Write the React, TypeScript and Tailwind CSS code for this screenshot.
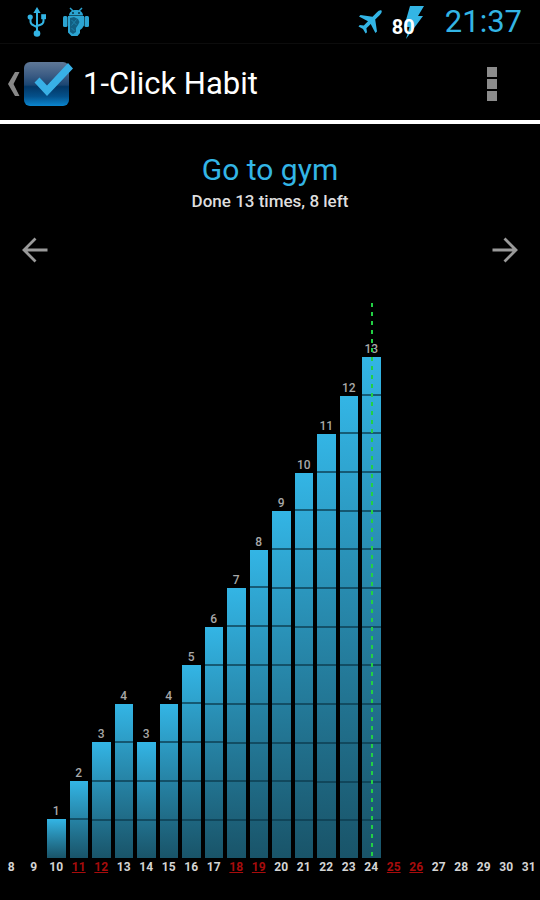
const days = [
  { day: 8, count: 0 },
  { day: 9, count: 0 },
  { day: 10, count: 1 },
  { day: 11, count: 2, weekend: true },
  { day: 12, count: 3, weekend: true },
  { day: 13, count: 4 },
  { day: 14, count: 3 },
  { day: 15, count: 4 },
  { day: 16, count: 5 },
  { day: 17, count: 6 },
  { day: 18, count: 7, weekend: true },
  { day: 19, count: 8, weekend: true },
  { day: 20, count: 9 },
  { day: 21, count: 10 },
  { day: 22, count: 11 },
  { day: 23, count: 12 },
  { day: 24, count: 13, today: true },
  { day: 25, count: 0, weekend: true },
  { day: 26, count: 0, weekend: true },
  { day: 27, count: 0 },
  { day: 28, count: 0 },
  { day: 29, count: 0 },
  { day: 30, count: 0 },
  { day: 31, count: 0 },
];

const SCALE_MAX = 14.4;

function UsbIcon() {
  return (
    <svg width="20" height="32" viewBox="0 0 20 32" fill="none" stroke="#33b5e5" strokeWidth="2">
      <path d="M10 5v22M3.5 12v3.5c0 2 1 3 3 3.8L10 21M16.5 12v3c0 2-1 3-3 3.8L10 20" />
      <path d="M10 1l3.6 6H6.4z" fill="#33b5e5" stroke="none" />
      <circle cx="3.2" cy="11" r="2.6" fill="#33b5e5" stroke="none" />
      <path d="M14.2 8.2h4.8v5h-4.8z" fill="#33b5e5" stroke="none" />
      <circle cx="10" cy="27.5" r="3.3" fill="#33b5e5" stroke="none" />
    </svg>
  );
}

function DebugIcon() {
  return (
    <svg width="28" height="32" viewBox="0 0 28 32" fill="#2ba4d2">
      <path d="M8 2l3 3M20 2l-3 3" stroke="#2ba4d2" strokeWidth="1.5" />
      <path d="M7 9.5C7 6 10 4 14 4s7 2 7 5.5z" />
      <rect x="1" y="10" width="4.5" height="11" rx="1.5" />
      <rect x="22.5" y="10" width="4.5" height="11" rx="1.5" />
      <path d="M6 10h16v9.5l-2 3-2 1.5v3l-2.5 3h-6L6 26.5z" />
      <path d="M8 12l4-1 4 2 1.5 3-1.5 3-2 3v4l-3 2-3-2z" fill="#125f82" />
      <path d="M9.500 14l5 5M14.500 13.500l-5 6M9.500 22l3 3" stroke="#1d82aa" strokeWidth="1" />
      <circle cx="11" cy="7" r="1" fill="#0b2f40" />
      <circle cx="17" cy="7" r="1" fill="#0b2f40" />
    </svg>
  );
}

function PlaneIcon() {
  return (
    <svg width="24" height="24" viewBox="0 0 24 24" fill="#33b5e5">
      <path d="M23.500.5C22-.2 20.500.7 19 2.200L14.500 6.800 2.500 5 1 6.600l9 4.700-4.200 4.300-4-.6L.5 16.400 5 19l2.600 4.500L9 22.200l-.6-4 4.300-4.200 4.700 9 1.600-1.500-1.800-12L21.800 5c1.500-1.500 2.400-3 1.700-4.500z" />
    </svg>
  );
}

function Battery() {
  return (
    <div className="relative h-9 w-8">
      <svg className="absolute top-0 right-0" width="20" height="34" viewBox="0 0 20 34" fill="#33b5e5">
        <path d="M6 1h14l-6 10h5L2 34l3.500-12H0z" />
      </svg>
      <span className="absolute top-3 left-0 text-[20px] leading-5 font-bold text-white">80</span>
    </div>
  );
}

function AppIcon() {
  return (
    <svg width="52" height="48" viewBox="0 0 52 48">
      <defs>
        <linearGradient id="tile" x1="0" y1="0" x2="0" y2="1">
          <stop offset="0" stopColor="#5f7897" />
          <stop offset="0.3" stopColor="#3c5c84" />
          <stop offset="0.52" stopColor="#1b4673" />
          <stop offset="0.56" stopColor="#033766" />
          <stop offset="0.78" stopColor="#04508a" />
          <stop offset="1" stopColor="#0a86cf" />
        </linearGradient>
      </defs>
      <rect x="1" y="2" width="45" height="44" rx="6" fill="url(#tile)" />
      <path d="M11.500 22.500l5-5 7.500 8L45 3l5 5.500L24 36z" fill="#38b0e6" />
    </svg>
  );
}

function ArrowLeft({ className = '' }: { className?: string }) {
  return (
    <svg className={className} width="26" height="26" viewBox="0 0 26 26" fill="none" stroke="#9a9a9a" strokeWidth="2.8">
      <path d="M25.500 13H2M13.500 1.500L2 13l11.500 11.500" />
    </svg>
  );
}

function StatusBar() {
  return (
    <div className="flex h-11 items-center justify-between border-b border-[#0c0c0c] pr-[18px] pl-[27px]">
      <div className="flex items-center gap-[15px]">
        <UsbIcon />
        <DebugIcon />
      </div>
      <div className="flex items-center text-[#33b5e5]">
        <PlaneIcon />
        <div className="mr-[21px] ml-[10px] pt-[2px]">
          <Battery />
        </div>
        <span className="text-[31px] leading-9">21:37</span>
      </div>
    </div>
  );
}

function ActionBar() {
  return (
    <header className="flex h-20 items-center justify-between border-b-4 border-white pt-1 pr-[41px] pl-[7px]">
      <div className="flex items-center">
        <button aria-label="Back" className="flex items-center">
          <svg width="16" height="26" viewBox="0 0 16 26" fill="#888">
            <path d="M8 1h4.500L6.500 13l6 12H8L1 13z" />
          </svg>
          <AppIcon />
        </button>
        <h1 className="ml-2 text-[31px] leading-9 text-white">1-Click Habit</h1>
      </div>
      <button aria-label="More options" className="flex flex-col gap-[2px] p-[2px]">
        <span className="size-[10px] bg-[#8c8c8c]" />
        <span className="size-[10px] bg-[#8c8c8c]" />
        <span className="size-[10px] bg-[#8c8c8c]" />
      </button>
    </header>
  );
}

function Chart() {
  return (
    <div className="mt-10">
      <div className="flex h-[555px]">
        {days.map(({ day, count, today }) => (
          <div key={day} className="relative flex flex-1 flex-col justify-end px-[2px]">
            {count > 0 && (
              <>
                <span className="text-center text-[12px] leading-4 font-medium text-[#a8a8a8]">{count}</span>
                <div
                  className="flex flex-col bg-linear-to-b from-[#33b5e5] to-[#195469]"
                  style={{ height: `${(count / SCALE_MAX) * 100}%` }}
                >
                  {Array.from({ length: count }, (_, i) => (
                    <div key={i} className="flex-1 border-[#0b3a4d]/70 not-first:border-t-2" />
                  ))}
                </div>
              </>
            )}
            {today && (
              <svg className="absolute inset-y-0 left-1/2 h-full w-[2px]" stroke="#22d044" strokeWidth="2">
                <line x1="1" y1="0" x2="1" y2="100%" strokeDasharray="4 5" />
              </svg>
            )}
          </div>
        ))}
      </div>
      <div className="flex text-center text-[12px] leading-[18px] font-bold text-[#d4d4d4]">
        {days.map(({ day, weekend }) => (
          <span key={day} className={weekend ? 'flex-1 text-[#a80c0c] underline' : 'flex-1'}>
            {day}
          </span>
        ))}
      </div>
    </div>
  );
}

export default function App() {
  return (
    <div className="min-h-screen bg-black font-['Roboto',sans-serif]">
      <StatusBar />
      <ActionBar />
      <main>
        <div className="pt-7 text-center">
          <h2 className="text-[30px] leading-9 text-[#33b5e5]">Go to gym</h2>
          <p className="text-[17px] leading-[26px] font-medium text-[#dedede]">Done 13 times, 8 left</p>
        </div>
        <div className="flex justify-between px-[22px] pt-[23px]">
          <button aria-label="Previous month">
            <ArrowLeft />
          </button>
          <button aria-label="Next month">
            <ArrowLeft className="rotate-180" />
          </button>
        </div>
        <Chart />
      </main>
    </div>
  );
}
